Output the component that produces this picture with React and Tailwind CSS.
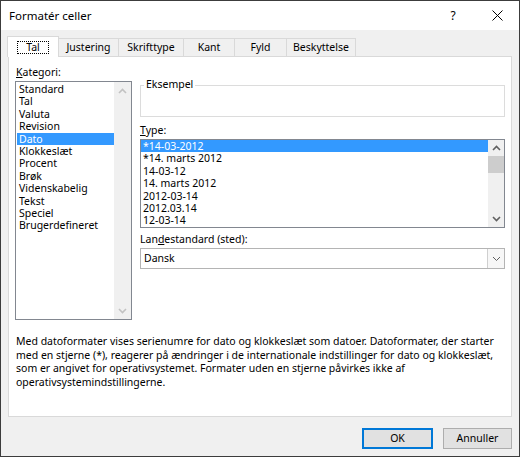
import React from "react";

const ChevUp = ({ color = "#606060" }) => (
  <svg width="9" height="6" viewBox="0 0 9 6">
    <polyline points="1,5 4.5,1.5 8,5" fill="none" stroke={color} strokeWidth="1.6" />
  </svg>
);
const ChevDown = ({ color = "#606060" }) => (
  <svg width="9" height="6" viewBox="0 0 9 6">
    <polyline points="1,1 4.5,4.5 8,1" fill="none" stroke={color} strokeWidth="1.6" />
  </svg>
);

const categories = [
  "Standard",
  "Tal",
  "Valuta",
  "Revision",
  "Dato",
  "Klokkeslæt",
  "Procent",
  "Brøk",
  "Videnskabelig",
  "Tekst",
  "Speciel",
  "Brugerdefineret",
];

const types = [
  "*14-03-2012",
  "*14. marts 2012",
  "14-03-12",
  "14. marts 2012",
  "2012-03-14",
  "2012.03.14",
  "12-03-14",
];

function Tab({ label, selected, w }) {
  if (selected) {
    return (
      <div
        className={`relative z-10 -mb-px -ml-px h-[21px] ${w} bg-white border-l border-t border-r border-[#d9d9d9] flex items-center justify-center`}
      >
        <div className="border border-dotted border-black px-[8px] h-[13px] flex items-center leading-none">
          {label}
        </div>
      </div>
    );
  }
  return (
    <div
      className={`h-[18px] ${w} bg-[#f0f0f0] border-t border-r border-[#d9d9d9] flex items-center justify-center leading-none`}
    >
      {label}
    </div>
  );
}

export default function App() {
  return (
    <div
      className="w-[520px] h-[457px] border border-[#3c3c3c] bg-[#f0f0f0] flex flex-col text-[10.5px] text-black overflow-hidden"
      style={{ fontFamily: '"Noto Sans", "DejaVu Sans", sans-serif' }}
    >
      {/* Title bar */}
      <div className="h-[29px] bg-white flex items-center pl-[8px] shrink-0">
        <div className="text-[11.5px] flex-1">Formatér celler</div>
        <div className="w-[20px] text-[12px] text-center mr-[24px]">?</div>
        <div className="w-[20px] flex items-center justify-center mr-[12px]">
          <svg width="11" height="11" viewBox="0 0 11 11">
            <path d="M0.5 0.5 L10.5 10.5 M10.5 0.5 L0.5 10.5" stroke="#000" strokeWidth="1" />
          </svg>
        </div>
      </div>

      {/* Body */}
      <div className="flex-1 flex flex-col px-[7px] pt-[6px]">
        {/* Tabs */}
        <div className="h-[20px] flex items-end">
          <Tab label="Tal" selected w="w-[52px]" />
          <Tab label="Justering" w="w-[60px]" />
          <Tab label="Skrifttype" w="w-[65px]" />
          <Tab label="Kant" w="w-[51px]" />
          <Tab label="Fyld" w="w-[52px]" />
          <Tab label="Beskyttelse" w="w-[69px]" />
        </div>

        {/* Panel */}
        <div className="h-[361px] bg-white border border-[#d9d9d9] pl-[6px] pr-[6px] pt-[8px] flex flex-col">
          <div className="flex gap-[8px]">
            {/* Left column */}
            <div className="w-[117px] flex flex-col">
              <div className="h-[14px] leading-[14px] pl-[1px]">
                <span className="underline">K</span>ategori:
              </div>
              <div className="mt-[2px] h-[239px] border border-[#828790] flex">
                <div className="flex-1 pt-[1px]">
                  {categories.map((c) => (
                    <div
                      key={c}
                      className={`h-[12.4px] leading-[12.4px] pl-[2px] ml-[1px] whitespace-nowrap ${
                        c === "Dato" ? "bg-[#3399ff] text-white" : ""
                      }`}
                    >
                      {c}
                    </div>
                  ))}
                </div>
                <div className="w-[17px] bg-[#f0f0f0] flex flex-col justify-between">
                  <div className="h-[17px] flex items-center justify-center">
                    <ChevUp color="#c2c2c2" />
                  </div>
                  <div className="h-[17px] flex items-center justify-center">
                    <ChevDown color="#c2c2c2" />
                  </div>
                </div>
              </div>
            </div>

            {/* Right column */}
            <div className="w-[365px] flex flex-col">
              <div className="mt-[20px] h-[32px] border border-[#dcdcdc] relative">
                <div className="absolute -top-[9px] left-[3px] bg-white px-[2px] leading-[14px]">
                  Eksempel
                </div>
              </div>
              <div className="mt-[6px] h-[14px] leading-[14px]">
                <span className="underline">T</span>ype:
              </div>
              <div className="mt-[2px] h-[89px] border border-[#828790] flex">
                <div className="flex-1">
                  {types.map((t, i) => (
                    <div
                      key={t}
                      className={`h-[12.4px] leading-[12.4px] pl-[2px] whitespace-nowrap ${
                        i === 0 ? "bg-[#3399ff] text-white" : ""
                      }`}
                    >
                      {t}
                    </div>
                  ))}
                </div>
                <div className="w-[16px] bg-[#f0f0f0] flex flex-col">
                  <div className="h-[16px] flex items-center justify-center">
                    <ChevUp />
                  </div>
                  <div className="h-[17px] bg-[#cdcdcd]" />
                  <div className="flex-1" />
                  <div className="h-[16px] flex items-center justify-center">
                    <ChevDown />
                  </div>
                </div>
              </div>
              <div className="mt-[4px] h-[14px] leading-[14px]">
                Lan<span className="underline">d</span>estandard (sted):
              </div>
              <div className="mt-[2px] h-[21px] border border-[#b4b4b4] flex items-stretch">
                <div className="flex-1 flex items-center pl-[3px]">Dansk</div>
                <div className="w-[17px] border-l border-[#cfcfcf] bg-[#f7f7f7] flex items-center justify-center">
                  <svg width="9" height="6" viewBox="0 0 9 6">
                    <polyline points="1,1 4.5,4.5 8,1" fill="none" stroke="#606060" strokeWidth="1" />
                  </svg>
                </div>
              </div>
            </div>
          </div>

          {/* Description */}
          <div className="mt-[15px] pl-[1px] leading-[13.7px] whitespace-nowrap">
            Med datoformater vises serienumre for dato og klokkeslæt som datoer. Datoformater, der starter
            <br />
            med en stjerne (*), reagerer på ændringer i de internationale indstillinger for dato og klokkeslæt,
            <br />
            som er angivet for operativsystemet. Formater uden en stjerne påvirkes ikke af
            <br />
            operativsystemindstillingerne.
          </div>
        </div>

        {/* Buttons */}
        <div className="mt-[11px] flex justify-end gap-[10px]">
          <button className="w-[71px] h-[21px] bg-[#e1e1e1] border-2 border-[#0078d7] flex items-center justify-center leading-none">
            OK
          </button>
          <button className="w-[69px] h-[21px] bg-[#e1e1e1] border border-[#adadad] flex items-center justify-center leading-none">
            Annuller
          </button>
        </div>
      </div>
    </div>
  );
}
